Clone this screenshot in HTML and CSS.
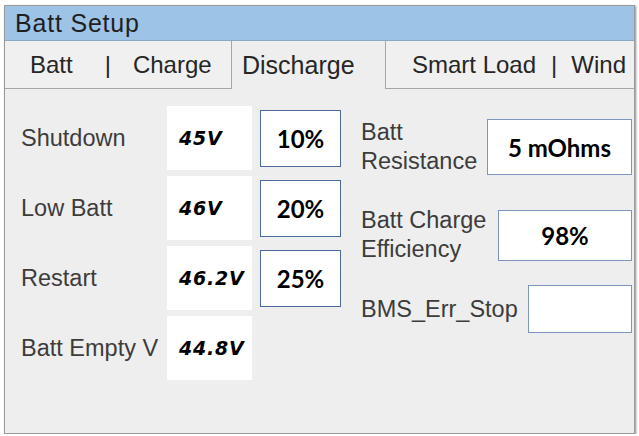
FILE: index.html
```html
<!DOCTYPE html>
<html lang="en">

<head>
    <meta charset="UTF-8">
    <meta name="viewport" content="width=device-width, initial-scale=1.0">
    <title>Batt Setup</title>
    <link rel="stylesheet" href="styles.css">
</head>

<body>
    <div class="panel">
        <div class="title">Batt Setup</div>

        <div class="tabs">
            <div class="tab tab-first">Batt<span class="sep sep-wide">|</span>Charge</div>
            <div class="tab tab-active">Discharge</div>
            <div class="tab tab-last">Smart Load<span class="sep">|</span>Wind</div>
        </div>

        <div class="content">
            <div class="levels">
                <div class="level">
                    <div class="label">Shutdown</div>
                    <div class="volt">45V</div>
                    <div class="pct">10%</div>
                </div>
                <div class="level">
                    <div class="label">Low Batt</div>
                    <div class="volt">46V</div>
                    <div class="pct">20%</div>
                </div>
                <div class="level">
                    <div class="label">Restart</div>
                    <div class="volt">46.2V</div>
                    <div class="pct">25%</div>
                </div>
                <div class="level">
                    <div class="label">Batt Empty V</div>
                    <div class="volt">44.8V</div>
                </div>
            </div>

            <div class="params">
                <div class="param param-res">
                    <div class="label">Batt<br>Resistance</div>
                    <div class="field">5 mOhms</div>
                </div>
                <div class="param param-eff">
                    <div class="label">Batt Charge<br>Efficiency</div>
                    <div class="field">98%</div>
                </div>
                <div class="param param-bms">
                    <div class="label">BMS_Err_Stop</div>
                    <div class="field"></div>
                </div>
            </div>
        </div>
    </div>
</body>

</html>
```

FILE: styles.css
```css
body {
    margin: 0;
    background-color: white;
    font-family: 'Liberation Sans', Arial, sans-serif;
}

.panel {
    margin: 5px 0 0 4px;
    width: 629px;
    height: 427px;
    background-color: #eeeeee;
    border: 1px solid #9a9a9a;
    box-shadow: 1px 1px 2px #8c8c8c;
    display: flex;
    flex-direction: column;
}

.title {
    height: 34px;
    line-height: 34px;
    padding-left: 10px;
    background-color: #9dc3e6;
    border-bottom: 1px solid #8aa9c6;
    color: #1f1f1f;
    font-size: 25px;
    letter-spacing: 0.8px;
}

.tabs {
    display: flex;
    height: 48px;
}

.tab {
    display: flex;
    align-items: center;
    font-size: 24px;
    color: #262626;
    background-color: #f0f0f0;
    border-bottom: 1px solid #a6a6a6;
}

.tab-first {
    width: 201px;
    padding-left: 25px;
    border-right: 1px solid #a6a6a6;
}

.tab-active {
    width: 143px;
    padding-left: 10px;
    background-color: #eeeeee;
    border-bottom: none;
    font-size: 25px;
}

.tab-last {
    flex: 1;
    padding-left: 26px;
    border-left: 1px solid #a6a6a6;
}

.sep {
    margin: 0 14px 0 15px;
}

.sep-wide {
    margin: 0 22px 0 32px;
}

.content {
    display: flex;
    flex: 1;
}

.label {
    font-size: 23.5px;
    line-height: 29px;
    color: #3c3c3c;
}

.levels {
    padding: 14px 0 0 16px;
    width: 340px;
}

.level {
    display: flex;
    align-items: center;
    height: 70px;
}

.level .label {
    width: 146px;
}

.volt {
    width: 73px;
    height: 64px;
    padding-left: 12px;
    display: flex;
    align-items: center;
    background-color: white;
    font-family: 'DejaVu Sans', Verdana, sans-serif;
    font-weight: bold;
    font-style: italic;
    font-size: 19px;
    letter-spacing: 0.8px;
    color: black;
}

.pct,
.field {
    display: flex;
    align-items: center;
    justify-content: center;
    background-color: white;
    font-family: Lato, 'Liberation Sans', sans-serif;
    font-weight: bold;
    font-size: 24px;
    color: black;
}

.pct {
    width: 79px;
    height: 55px;
    margin-left: 8px;
    border: 1px solid #4d6a9f;
}

.params {
    flex: 1;
    padding-top: 29px;
    margin-right: 2px;
}

.param {
    display: flex;
    align-items: center;
}

.param .label {
    flex: 1;
}

.field {
    border: 1px solid #7d94bd;
}

.param-res .field {
    width: 143px;
    height: 54px;
}

.param-eff {
    margin-top: 30px;
}

.param-eff .field {
    width: 132px;
    height: 49px;
}

.param-bms {
    margin-top: 21px;
}

.param-bms .field {
    width: 102px;
    height: 46px;
}
```
